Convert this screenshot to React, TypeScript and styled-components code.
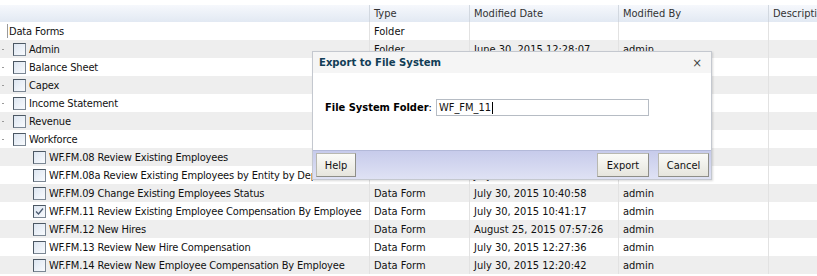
import React from "react";
import styled, { createGlobalStyle } from "styled-components";

const Global = createGlobalStyle`
  html, body { margin: 0; padding: 0; background: #fff; }
  body { font-family: "DejaVu Sans Condensed", "DejaVu Sans", sans-serif; font-size: 11px; color: #000; }
`;

const COLS = "369px 100px 149px 150px 1fr";

const Page = styled.div`
  position: relative;
  width: 817px;
  height: 276px;
  overflow: hidden;
  background: #fff;
`;

const HeaderRow = styled.div`
  display: grid;
  grid-template-columns: ${COLS};
  margin-top: 5px;
  height: 17px;
  background: linear-gradient(#f6f8fc, #e2e9f3);
`;

const HeadCell = styled.div<{ $border?: boolean }>`
  padding-left: 4px;
  line-height: 18px;
  color: #333;
  white-space: nowrap;
  overflow: hidden;
  border-left: ${(p) => (p.$border ? "1px solid #d2d8e0" : "none")};
`;

const Row = styled.div<{ $alt?: boolean }>`
  display: grid;
  grid-template-columns: ${COLS};
  height: 18px;
  background: ${(p) => (p.$alt ? "#eeeeee" : "#fff")};
`;

const Cell = styled.div<{ $border?: boolean }>`
  padding-left: 4px;
  line-height: 19px;
  white-space: nowrap;
  overflow: hidden;
  color: #111;
  border-left: ${(p) => (p.$border ? "1px solid #e2e2e2" : "none")};
`;

const NameCell = styled.div<{ $level: number }>`
  position: relative;
  display: flex;
  align-items: center;
  gap: 3px;
  padding-left: ${(p) => (p.$level === 0 ? 9 : p.$level === 1 ? 13 : 33)}px;
  line-height: 19px;
  letter-spacing: -0.17px;
  white-space: nowrap;
  overflow: hidden;
  color: #111;
`;

const TreeDot = styled.span`
  position: absolute;
  left: 2px;
  top: 9px;
  width: 2px;
  height: 1px;
  background: #9a9a9a;
`;

const TreeBar = styled.span`
  position: absolute;
  left: 7px;
  top: 2px;
  width: 1px;
  height: 14px;
  background: #9a9a9a;
`;

const Box = styled.span`
  display: inline-flex;
  align-items: center;
  justify-content: center;
  flex: none;
  width: 11px;
  height: 11px;
  margin-top: 1px;
  border: 1px solid #4c5864;
  border-right-color: #7b8794;
  border-bottom-color: #7b8794;
  background: linear-gradient(135deg, #dde6f1, #f8fafd);
`;

const Overlay = styled.div`
  position: absolute;
  left: 312px;
  top: 51px;
  width: 398px;
  height: 127px;
  background: #fff;
  border: 1px solid #c4c8cf;
  box-shadow: 1px 1px 2px rgba(0, 0, 0, 0.15);
  display: flex;
  flex-direction: column;
`;

const DialogTitle = styled.div`
  height: 21px;
  display: flex;
  align-items: center;
  justify-content: space-between;
  padding: 0 9px 0 6px;
  background: #f5f5f5;
  font-weight: bold;
  font-size: 11.2px;
  color: #113d56;
`;

const Close = styled.span`
  font-weight: normal;
  font-size: 13px;
  color: #444;
`;

const DialogBody = styled.div`
  flex: 1;
  display: flex;
  align-items: center;
  padding: 0 0 8px 12px;
  gap: 4px;
`;

const Label = styled.span`
  color: #000;
  b { font-weight: bold; }
`;

const Input = styled.div`
  width: 209px;
  height: 15px;
  border: 1px solid #b6bcc4;
  padding-left: 2px;
  line-height: 15px;
  color: #111;
  display: flex;
  align-items: center;
`;

const Caret = styled.span`
  display: inline-block;
  width: 1px;
  height: 12px;
  background: #000;
  margin-left: 1px;
`;

const Footer = styled.div`
  height: 28px;
  display: flex;
  align-items: center;
  padding: 0 2px 0 3px;
  gap: 9px;
  background: linear-gradient(#c7cbeb, #dfe2f4);
  border-top: 1px solid #b3b9d9;
`;

const Spacer = styled.div`
  flex: 1;
`;

const Button = styled.div<{ $w: number }>`
  width: ${(p) => p.$w}px;
  height: 24px;
  box-sizing: border-box;
  display: flex;
  align-items: center;
  justify-content: center;
  background: linear-gradient(#fbfbf8, #e6e5dd);
  border: 1px solid #b8b8b0;
  border-right-color: #8e8e88;
  border-bottom-color: #8e8e88;
  color: #111;
`;

type Item = { name: string; level: number; type?: string; date?: string; by?: string; checked?: boolean };

const items: Item[] = [
  { name: "Data Forms", level: 0, type: "Folder" },
  { name: "Admin", level: 1, type: "Folder", date: "June 30, 2015 12:28:07", by: "admin" },
  { name: "Balance Sheet", level: 1 },
  { name: "Capex", level: 1 },
  { name: "Income Statement", level: 1 },
  { name: "Revenue", level: 1 },
  { name: "Workforce", level: 1 },
  { name: "WF.FM.08 Review Existing Employees", level: 2 },
  { name: "WF.FM.08a Review Existing Employees by Entity by Department", level: 2, type: "Data Form", date: "July 30, 2015 10:40:12", by: "admin" },
  { name: "WF.FM.09 Change Existing Employees Status", level: 2, type: "Data Form", date: "July 30, 2015 10:40:58", by: "admin" },
  { name: "WF.FM.11 Review Existing Employee Compensation By Employee", level: 2, type: "Data Form", date: "July 30, 2015 10:41:17", by: "admin", checked: true },
  { name: "WF.FM.12 New Hires", level: 2, type: "Data Form", date: "August 25, 2015 07:57:26", by: "admin" },
  { name: "WF.FM.13 Review New Hire Compensation", level: 2, type: "Data Form", date: "July 30, 2015 12:27:36", by: "admin" },
  { name: "WF.FM.14 Review New Employee Compensation By Employee", level: 2, type: "Data Form", date: "July 30, 2015 12:20:42", by: "admin" },
];

const Check = () => (
  <svg width="9" height="9" viewBox="0 0 9 9">
    <path d="M1 4.5 L3.5 7 L8 1.5" fill="none" stroke="#4a5a70" strokeWidth="1.3" />
  </svg>
);

export default function App() {
  return (
    <Page>
      <Global />
      <HeaderRow>
        <HeadCell />
        <HeadCell $border>Type</HeadCell>
        <HeadCell $border>Modified Date</HeadCell>
        <HeadCell $border>Modified By</HeadCell>
        <HeadCell $border>Description</HeadCell>
      </HeaderRow>
      {items.map((it, i) => (
        <Row key={i} $alt={i % 2 === 1}>
          <NameCell $level={it.level}>
            {it.level === 0 && <TreeBar />}
            {it.level === 1 && <TreeDot />}
            {it.level > 0 && <Box>{it.checked && <Check />}</Box>}
            <span>{it.name}</span>
          </NameCell>
          <Cell $border>{it.type ?? ""}</Cell>
          <Cell $border>{it.date ?? ""}</Cell>
          <Cell $border>{it.by ?? ""}</Cell>
          <Cell $border />
        </Row>
      ))}
      <Overlay>
        <DialogTitle>
          <span>Export to File System</span>
          <Close>×</Close>
        </DialogTitle>
        <DialogBody>
          <Label>
            <b>File System Folder</b>:
          </Label>
          <Input>
            WF_FM_11
            <Caret />
          </Input>
        </DialogBody>
        <Footer>
          <Button $w={40}>Help</Button>
          <Spacer />
          <Button $w={52}>Export</Button>
          <Button $w={51}>Cancel</Button>
        </Footer>
      </Overlay>
    </Page>
  );
}
